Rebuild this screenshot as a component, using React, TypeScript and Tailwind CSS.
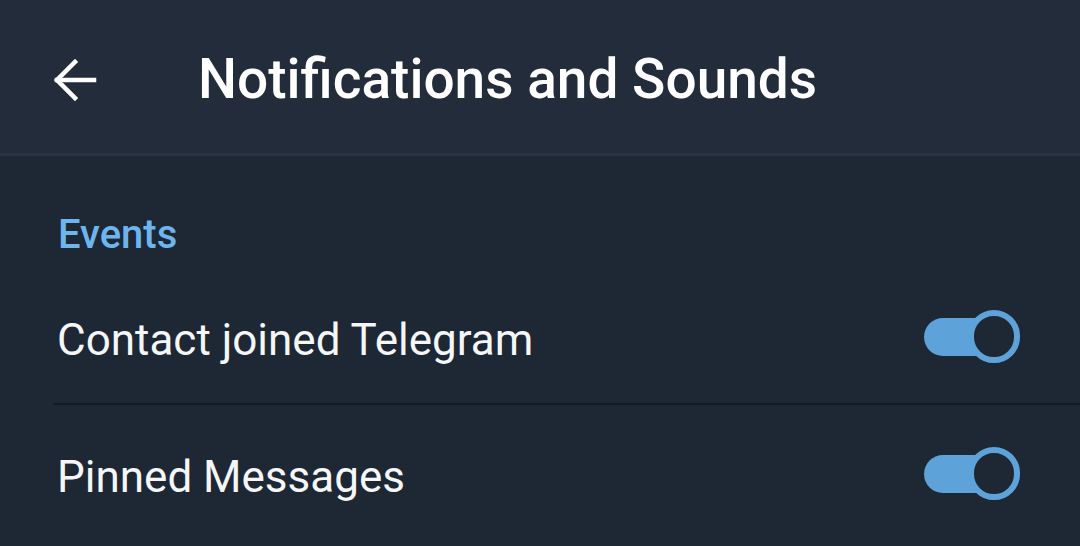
import React from "react";

function Toggle() {
  return (
    <div className="relative w-[96px] h-[56px] flex items-center">
      <div className="w-[70px] h-[38px] rounded-full bg-[#5ea2da]" />
      <div className="absolute left-[44px] top-[1px] w-[52px] h-[53px] rounded-full border-[6px] border-[#5ea2da] bg-[#1e2734]" />
    </div>
  );
}

function Row({ label, divider }: { label: string; divider?: boolean }) {
  return (
    <div className="relative h-[137px] flex items-center pl-[57px] pr-[60px]">
      <div className="flex-1 pt-[6px] text-[44px] text-[#f4f6f8] leading-none">{label}</div>
      <Toggle />
      {divider && <div className="absolute left-[53px] right-0 bottom-0 h-[2px] bg-[#141a23]" />}
    </div>
  );
}

export default function App() {
  return (
    <div className="w-[1080px] h-[546px] overflow-hidden bg-[#1e2734] flex flex-col" style={{ fontFamily: "Roboto, sans-serif" }}>
      <div className="h-[153px] bg-[#222c3b] flex items-center pt-[6px] shrink-0">
        <div className="w-[198px] flex items-center pl-[53px]">
          <svg width="44" height="44" viewBox="0 0 44 44" fill="none" stroke="#ffffff" strokeWidth="4.5" strokeLinecap="square">
            <path d="M4 22 H41" />
            <path d="M22 4 L4 22 L22 40" />
          </svg>
        </div>
        <div className="text-[55px] font-medium text-white leading-none">Notifications and Sounds</div>
      </div>
      <div className="h-[3px] bg-[#273242] shrink-0" />
      <div className="h-[112px] flex items-start pt-[59px] pl-[58px] shrink-0">
        <div className="text-[40px] font-medium text-[#6db5ef] leading-none">Events</div>
      </div>
      <Row label="Contact joined Telegram" divider />
      <Row label="Pinned Messages" />
    </div>
  );
}
